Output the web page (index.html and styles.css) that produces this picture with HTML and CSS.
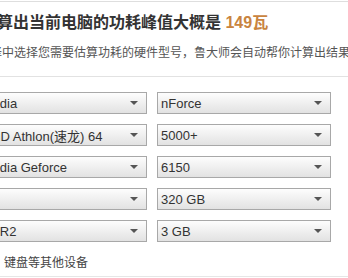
FILE: index.html
```html
<!DOCTYPE html>
<html lang="zh-CN">
<head>
  <meta charset="UTF-8">
  <title>功耗计算</title>
  <meta name="viewport" content="width=device-width, initial-scale=1.0">
  <link rel="stylesheet" href="styles.css">
</head>
<body>

  <div class="page">
    <div class="line"></div>
    <h2 class="title">算出当前电脑的功耗峰值大概是 <span class="watt">149瓦</span></h2>
    <p class="tip">择中选择您需要估算功耗的硬件型号，鲁大师会自动帮你计算出结果</p>
    <div class="line sep"></div>

    <div class="rows">
      <div class="sel">Nvidia<i class="arrow"></i></div>
      <div class="sel">nForce<i class="arrow"></i></div>

      <div class="sel">AMD Athlon(速龙) 64<i class="arrow"></i></div>
      <div class="sel">5000+<i class="arrow"></i></div>

      <div class="sel">Nvidia Geforce<i class="arrow"></i></div>
      <div class="sel">6150<i class="arrow"></i></div>

      <div class="sel"><i class="arrow"></i></div>
      <div class="sel">320 GB<i class="arrow"></i></div>

      <div class="sel">DDR2<i class="arrow"></i></div>
      <div class="sel">3 GB<i class="arrow"></i></div>
    </div>

    <div class="other">键盘等其他设备</div>
    <div class="line bottom"></div>
  </div>

</body>
</html>
```

FILE: styles.css
```css
* {
  box-sizing: border-box;
}

body {
  margin: 0;
  padding: 0;
  background: #fff;
  font-family: "Liberation Sans", "Noto Sans CJK SC", sans-serif;
  overflow: hidden;
}

.page {
  width: 348px;
  height: 278px;
  overflow: hidden;
}

.line {
  height: 1px;
  margin-top: 1px;
  background: #dedede;
}

.title {
  margin: 10px 0 0 -3px;
  font-size: 16px;
  line-height: 22px;
  font-weight: bold;
  color: #333;
  white-space: nowrap;
}

.watt {
  color: #c9843f;
}

.tip {
  margin: 11px 0 0 -10px;
  font-size: 12px;
  line-height: 16px;
  color: #555;
  white-space: nowrap;
}

.sep {
  margin-top: 15px;
  background: #e2e2e2;
}

.rows {
  display: grid;
  grid-template-columns: 170px 174px;
  column-gap: 10px;
  row-gap: 10px;
  margin: 15px 0 0 -23px;
}

.sel {
  position: relative;
  height: 22px;
  display: flex;
  align-items: center;
  padding-left: 3px;
  border: 1px solid #a8a8a8;
  background: linear-gradient(#fdfdfd, #f1f1f1 45%, #e2e2e2);
  font-size: 13px;
  color: #333;
  white-space: nowrap;
}

.arrow {
  position: absolute;
  right: 8px;
  top: 8px;
  width: 0;
  height: 0;
  border-left: 4px solid transparent;
  border-right: 4px solid transparent;
  border-top: 4px solid #555;
}

.other {
  margin: 13px 0 0 4px;
  font-size: 12px;
  line-height: 16px;
  color: #444;
}

.bottom {
  margin-top: 5px;
  background: #e6e6e6;
}
```
